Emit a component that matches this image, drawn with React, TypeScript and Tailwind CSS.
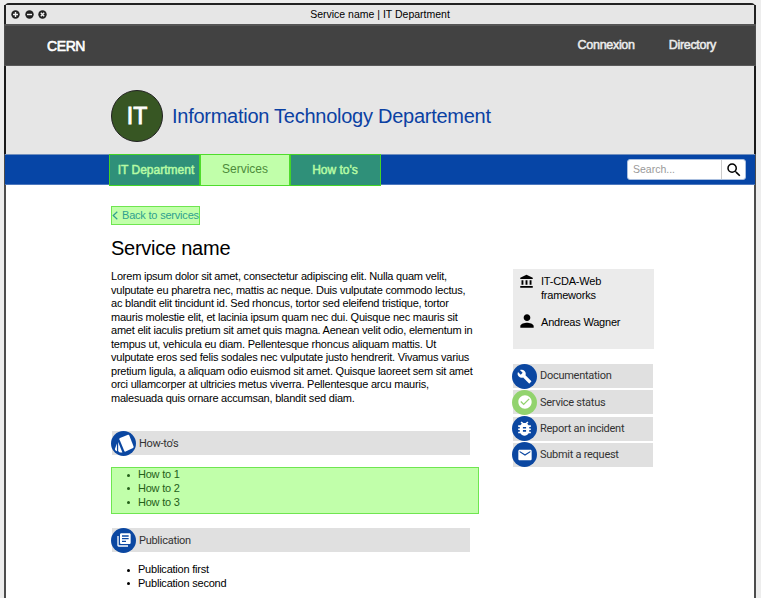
import React from "react";
import {
  MdAccountBalance,
  MdBugReport,
  MdBuild,
  MdCheckCircle,
  MdEmail,
  MdLibraryBooks,
  MdPerson,
  MdSearch,
} from "react-icons/md";

const paragraph: string[] = [
  "Lorem ipsum dolor sit amet, consectetur adipiscing elit. Nulla quam velit,",
  "vulputate eu pharetra nec, mattis ac neque. Duis vulputate commodo lectus,",
  "ac blandit elit tincidunt id. Sed rhoncus, tortor sed eleifend tristique, tortor",
  "mauris molestie elit, et lacinia ipsum quam nec dui. Quisque nec mauris sit",
  "amet elit iaculis pretium sit amet quis magna. Aenean velit odio, elementum in",
  "tempus ut, vehicula eu diam. Pellentesque rhoncus aliquam mattis. Ut",
  "vulputate eros sed felis sodales nec vulputate justo hendrerit. Vivamus varius",
  "pretium ligula, a aliquam odio euismod sit amet. Quisque laoreet sem sit amet",
  "orci ullamcorper at ultricies metus viverra. Pellentesque arcu mauris,",
  "malesuada quis ornare accumsan, blandit sed diam.",
];

function WindowButton({ d }: { d: string }) {
  return (
    <svg className="size-[9px]" viewBox="0 0 9 9">
      <circle cx="4.5" cy="4.5" r="4.2" fill="#222" />
      <path d={d} stroke="#f2f2f2" strokeWidth="1.4" />
    </svg>
  );
}

function CardsIcon() {
  return (
    <svg className="size-[25px]" viewBox="0 0 25 25" fill="white">
      <path d="M9 7L17 3.8Q17.9 3.5 18.3 4.4L22.6 15.6Q22.9 16.5 22.1 16.9L14.6 20.6Q13.7 21 13.3 20.1L8.4 8.2Q8.1 7.4 9 7Z" />
      <path d="M7.2 11L11.4 21.4L9.4 21.4Q7.4 21.3 7.2 19.4Z" />
      <path d="M5.9 12.6L6 20.2L4.6 19.4Q3.7 18.8 4 17.8Z" />
    </svg>
  );
}

function IconBar({
  icon,
  label,
  color = "bg-[#0b47a1]",
  className = "",
}: {
  icon: React.ReactNode;
  label: string;
  color?: string;
  className?: string;
}) {
  return (
    <div className={`flex h-6 items-center bg-[#e0e0e0] font-['Roboto',sans-serif] text-[11px] tracking-[-0.27px] text-[#333] ${className}`}>
      <span className={`-ml-px flex size-[25px] shrink-0 items-center justify-center rounded-full text-white ${color}`}>
        {icon}
      </span>
      <span className="ml-[3px] pt-px whitespace-nowrap">{label}</span>
    </div>
  );
}

function Bullets({ items, className = "" }: { items: string[]; className?: string }) {
  return (
    <ul className={`text-[11px] leading-[13.6px] tracking-[-0.22px] ${className}`}>
      {items.map((item) => (
        <li key={item} className="flex items-center">
          <span className="mr-2 size-[3px] rounded-full bg-current" />
          {item}
        </li>
      ))}
    </ul>
  );
}

export default function App() {
  return (
    <div className="h-[598px] w-[761px] overflow-hidden bg-[#ededed] pt-[3px] pl-1 font-['Liberation_Sans',Arial,sans-serif] text-black">
      <div className="h-[610px] w-[752px] rounded-t-[5px] border-2 border-[#4d4d4d] border-t-[#222] bg-white">
        <div className="-mx-0.5 grid h-[19px] grid-cols-[1fr_auto_1fr] items-center border-x-2 border-[#222] bg-[#e6e6e6]">
          <div className="flex gap-[4.5px] pl-[5px]">
            <WindowButton d="M2 4.5H7M4.5 2V7" />
            <WindowButton d="M2 4.5H7" />
            <WindowButton d="M2.8 2.8L6.2 6.2M6.2 2.8L2.8 6.2" />
          </div>
          <span className="text-[10.5px] leading-none">Service name | IT Department</span>
        </div>

        <div className="-mx-px flex h-[42px] items-center border-t-2 border-b border-t-[#555] border-b-[#5a5a5a] bg-[#424242] pr-[38px] pl-[42px] text-[#ececec]">
          <span className="pt-0.5 text-[14px] tracking-[-0.4px] text-white [-webkit-text-stroke:0.6px_white]">CERN</span>
          <div className="ml-auto flex gap-[34px] pr-px pb-px text-[12.5px] tracking-[-0.3px] [-webkit-text-stroke:0.5px_#ececec]">
            <span>Connexion</span>
            <span>Directory</span>
          </div>
        </div>

        <div className="-mx-0.5 flex h-[88px] items-center border-x-2 border-[#1a1a1a] bg-[#e6e6e6] pt-3 pl-[105px]">
          <div className="flex size-[52px] items-center justify-center rounded-full border border-[#222] bg-[#375623] text-[23px] text-white [-webkit-text-stroke:0.9px_white]">
            IT
          </div>
          <span className="ml-[9px] text-[20px] tracking-[-0.26px] text-[#0b41a3]">Information Technology Departement</span>
        </div>

        <div className="-mx-px flex h-[31px] border-t border-b border-t-[#718fbd] border-b-[#4c77bd] bg-[#0645a6] pl-[104px]">
          <div className="-my-px flex h-8 text-[12px] text-[#b6fba4]">
            <div className="flex w-[91px] items-center justify-center border border-[#45d427] bg-[#2f9079] pl-[3px] [-webkit-text-stroke:0.5px_#b6fba4]">
              IT Department
            </div>
            <div className="flex w-[90px] items-center justify-center border border-[#4fdc2c] bg-[#c1ffaa] pb-0.5 text-[#4d8b3b]">
              Services
            </div>
            <div className="flex w-[91px] items-center justify-center border border-[#45d427] bg-[#2f9079] pr-px [-webkit-text-stroke:0.5px_#b6fba4]">
              How to's
            </div>
          </div>
          <div className="mt-1 mr-[9px] ml-auto flex h-[21px] w-[119px] rounded-[3px] border border-[#aabfdf] bg-white">
            <span className="flex flex-1 items-center pt-px pl-[5px] text-[10.5px] text-[#999]">Search...</span>
            <span className="flex w-6 items-center justify-center border-l border-[#ccc]">
              <MdSearch className="size-[18px]" />
            </span>
          </div>
        </div>

        <div className="flex pl-[105px]">
          <main className="w-[402px]">
            <a className="mt-[21px] flex h-[19px] w-[89px] items-center border border-[#6fe650] bg-[#c1ffaa] text-[11px] tracking-[-0.2px] whitespace-nowrap text-[#2f9f8f]">
              <svg className="mr-1 h-[9px] w-[6px] shrink-0" viewBox="0 0 6 9" fill="none" stroke="currentColor" strokeWidth="1.2">
                <path d="M5.3 0.7L1.2 4.5L5.3 8.3" />
              </svg>
              Back to services
            </a>
            <h1 className="mt-[11px] text-[20px] leading-6 tracking-[-0.25px]">Service name</h1>
            <div className="mt-[10px] text-[11px] leading-[13.55px] tracking-[-0.22px] whitespace-nowrap">
              {paragraph.map((line) => (
                <p key={line}>{line}</p>
              ))}
            </div>
            <IconBar className="mt-[26px] ml-px w-[358px]" label="How-to's" icon={<CardsIcon />} />
            <Bullets
              className="mt-3 h-[47px] w-[368px] border border-[#6fe650] bg-[#c1ffaa] pl-[15px] text-[#246019]"
              items={["How to 1", "How to 2", "How to 3"]}
            />
            <IconBar
              className="mt-[14px] ml-px w-[358px]"
              label="Publication"
              icon={<MdLibraryBooks className="size-[16px]" />}
            />
            <Bullets className="mt-[11px] pl-4" items={["Publication first", "Publication second"]} />
          </main>

          <aside className="mt-[84px] w-[141px]">
            <div className="h-20 bg-[#ebebeb] pt-[6px] pl-[6px] text-[11px] leading-[13.6px] tracking-[-0.2px]">
              <div className="flex gap-[7px]">
                <MdAccountBalance className="-mt-px size-[15px] shrink-0" />
                <p>
                  IT-CDA-Web
                  <br />
                  frameworks
                </p>
              </div>
              <div className="mt-[10px] flex gap-1">
                <MdPerson className="-mt-px -ml-[2px] size-5 shrink-0" />
                <p className="pt-[3.5px]">Andreas Wagner</p>
              </div>
            </div>
            <div className="mt-[15px] flex w-[140px] flex-col gap-[2.3px]">
              <IconBar label="Documentation" icon={<MdBuild className="size-[15px]" />} />
              <IconBar label="Service status" color="bg-[#92d36e]" icon={<MdCheckCircle className="size-[16px]" />} />
              <IconBar label="Report an incident" icon={<MdBugReport className="size-[19px]" />} />
              <IconBar label="Submit a request" icon={<MdEmail className="size-[16px]" />} />
            </div>
          </aside>
        </div>
      </div>
    </div>
  );
}
